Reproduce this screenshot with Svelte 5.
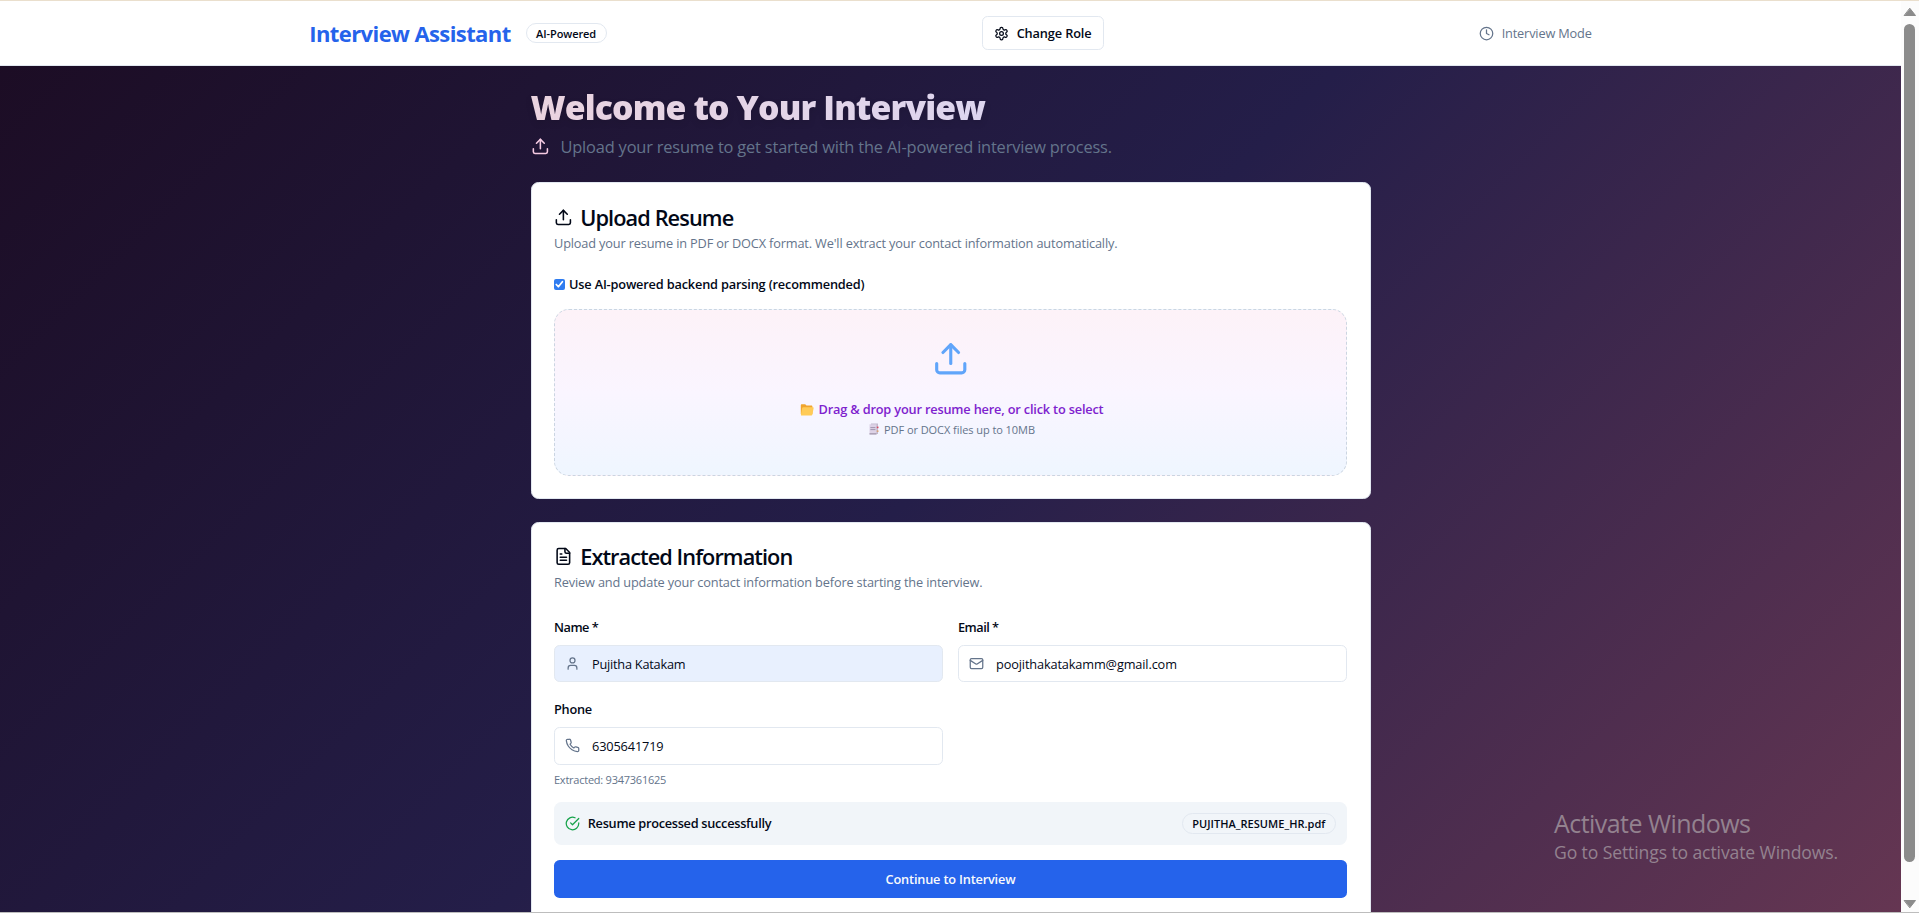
<script>
  let name = $state('Pujitha Katakam');
  let email = $state('poojithakatakamm@gmail.com');
  let phone = $state('6305641719');
  let useBackend = $state(true);
</script>

{#snippet upload()}
  <path d="M21 15v4a2 2 0 0 1-2 2H5a2 2 0 0 1-2-2v-4" />
  <polyline points="17 8 12 3 7 8" />
  <line x1="12" x2="12" y1="3" y2="15" />
{/snippet}

<div class="screen">
  <div class="page">
    <header>
      <div class="bar">
        <div class="brand">
          <span class="logo">Interview Assistant</span>
          <span class="badge">AI-Powered</span>
        </div>
        <button class="role">
          <svg class="i15" viewBox="0 0 24 24">
            <path d="M12.22 2h-.44a2 2 0 0 0-2 2v.18a2 2 0 0 1-1 1.73l-.43.25a2 2 0 0 1-2 0l-.15-.08a2 2 0 0 0-2.73.73l-.22.38a2 2 0 0 0 .73 2.73l.15.1a2 2 0 0 1 1 1.72v.51a2 2 0 0 1-1 1.74l-.15.09a2 2 0 0 0-.73 2.73l.22.38a2 2 0 0 0 2.73.73l.15-.08a2 2 0 0 1 2 0l.43.25a2 2 0 0 1 1 1.73V20a2 2 0 0 0 2 2h.44a2 2 0 0 0 2-2v-.18a2 2 0 0 1 1-1.73l.43-.25a2 2 0 0 1 2 0l.15.08a2 2 0 0 0 2.73-.73l.22-.39a2 2 0 0 0-.73-2.73l-.15-.08a2 2 0 0 1-1-1.74v-.5a2 2 0 0 1 1-1.74l.15-.09a2 2 0 0 0 .73-2.73l-.22-.38a2 2 0 0 0-2.73-.73l-.15.08a2 2 0 0 1-2 0l-.43-.25a2 2 0 0 1-1-1.73V4a2 2 0 0 0-2-2z" />
            <circle cx="12" cy="12" r="3" />
          </svg>
          <span>Change Role</span>
        </button>
        <div class="mode">
          <svg class="i15" viewBox="0 0 24 24"><circle cx="12" cy="12" r="10" /><polyline points="12 6 12 12 16 14" /></svg>
          <span>Interview Mode</span>
        </div>
      </div>
    </header>

    <main>
      <h1>Welcome to Your Interview</h1>
      <p class="lead">
        <svg class="i18" viewBox="0 0 24 24">{@render upload()}</svg>
        <span>Upload your resume to get started with the AI-powered interview process.</span>
      </p>

      <section class="card">
        <h2><svg class="i18" viewBox="0 0 24 24">{@render upload()}</svg><span class="t1">Upload Resume</span></h2>
        <p class="desc">Upload your resume in PDF or DOCX format. We'll extract your contact information automatically.</p>
        <label class="check">
          <input type="checkbox" bind:checked={useBackend} />
          <span class="box"><svg viewBox="0 0 12 12"><path d="M2.6 6.3 5 8.8 9.6 3.2" /></svg></span>
          <span>Use AI-powered backend parsing (recommended)</span>
        </label>
        <div class="drop">
          <svg class="big" viewBox="0 0 24 24">{@render upload()}</svg>
          <p class="drag">
            <svg class="folder" viewBox="0 0 14 14">
              <path d="M.8 2.4c0-.7.4-1.1 1-1.1h3.4l1.3 1.2h4.9c.6 0 1 .4 1 1V11H.8z" fill="#f0a52e" />
              <path d="M3.2 4.3h9.6c.6 0 .9.4.8 1l-1.2 6.3c-.1.7-.5 1-1.1 1H1.6c-.5 0-.8-.3-.7-.9l1.2-6.5c.1-.6.5-.9 1.1-.9z" fill="#ffcb57" />
            </svg>
            <span>Drag &amp; drop your resume here, or click to select</span>
          </p>
          <p class="hint">
            <svg class="pages" viewBox="0 0 12 12">
              <path d="M3 .5h7v10.5H3z" fill="#c3b9cc" />
              <path d="M1.5 1.3h7v10.2h-7z" fill="#ddd2e6" />
              <path d="M1.5 10.2h7v1.3h-7z" fill="#a398ac" />
              <path d="M2.8 4.6h4.2M2.8 6.6h4.2" stroke="#9187a0" stroke-width=".8" />
              <path d="M8.8 3.6h1.7v1.6H8.8z" fill="#d9475c" />
              <path d="M8.8 7.4h1.7v1.5H8.8z" fill="#d8a06d" />
            </svg>
            <span>PDF or DOCX files up to 10MB</span>
          </p>
        </div>
      </section>

      <section class="card">
        <h2>
          <svg class="i18" viewBox="0 0 24 24">
            <path d="M15 2H6a2 2 0 0 0-2 2v16a2 2 0 0 0 2 2h12a2 2 0 0 0 2-2V7Z" /><path d="M14 2v4a2 2 0 0 0 2 2h4" />
            <path d="M10 9H8" /><path d="M16 13H8" /><path d="M16 17H8" />
          </svg>
          <span class="t2">Extracted Information</span>
        </h2>
        <p class="desc">Review and update your contact information before starting the interview.</p>
        <div class="grid">
          <div class="field">
            <label for="name">Name *</label>
            <div class="wrap filled">
              <svg class="i15" viewBox="0 0 24 24"><path d="M19 21v-2a4 4 0 0 0-4-4H9a4 4 0 0 0-4 4v2" /><circle cx="12" cy="7" r="4" /></svg>
              <input id="name" class="n" bind:value={name} />
            </div>
          </div>
          <div class="field">
            <label for="email">Email *</label>
            <div class="wrap">
              <svg class="i15" viewBox="0 0 24 24"><rect width="20" height="16" x="2" y="4" rx="2" /><path d="m22 7-8.97 5.7a1.94 1.94 0 0 1-2.06 0L2 7" /></svg>
              <input id="email" bind:value={email} />
            </div>
          </div>
          <div class="field phone">
            <label for="phone">Phone</label>
            <div class="wrap">
              <svg class="i15" viewBox="0 0 24 24"><path d="M22 16.92v3a2 2 0 0 1-2.18 2 19.79 19.79 0 0 1-8.63-3.07 19.5 19.5 0 0 1-6-6 19.79 19.79 0 0 1-3.07-8.67A2 2 0 0 1 4.11 2h3a2 2 0 0 1 2 1.72 12.84 12.84 0 0 0 .7 2.81 2 2 0 0 1-.45 2.11L8.09 9.91a16 16 0 0 0 6 6l1.27-1.27a2 2 0 0 1 2.11-.45 12.84 12.84 0 0 0 2.81.7A2 2 0 0 1 22 16.92z" /></svg>
              <input id="phone" bind:value={phone} />
            </div>
            <p class="extracted">Extracted: 9347361625</p>
          </div>
        </div>
        <div class="status">
          <svg class="i15" viewBox="0 0 24 24"><path d="M22 11.08V12a10 10 0 1 1-5.93-9.14" /><path d="m9 11 3 3L22 4" /></svg>
          <span class="ok">Resume processed successfully</span>
          <span class="file">PUJITHA_RESUME_HR.pdf</span>
        </div>
        <button class="go">Continue to Interview</button>
      </section>
    </main>
  </div>

  <div class="scroll">
    <svg viewBox="0 0 14 10"><path d="M7 1.5 12.5 8.5H1.5z" /></svg>
    <div class="thumb"></div>
    <svg viewBox="0 0 14 10"><path d="M7 8.5 12.5 1.5H1.5z" /></svg>
  </div>

  <div class="watermark">
    <div class="w1">Activate Windows</div>
    <div class="w2">Go to Settings to activate Windows.</div>
  </div>
</div>

<style>
  :global(html) { font-size: 15px; }
  :global(body) { overflow: hidden; }
  * { box-sizing: border-box; margin: 0; }
  .screen {
    position: relative;
    display: flex;
    width: 100%;
    height: 913px;
    overflow: hidden;
    border-top: 1px solid #eadfcd;
    border-bottom: 1px solid #bdbdbd;
    font-family: "Open Sans", "Noto Sans", sans-serif;
    font-size: .85rem;
    line-height: 1.25rem;
    letter-spacing: -.16px;
    color: #020817;
  }
  .page {
    flex: 1;
    overflow: hidden;
    background: linear-gradient(135deg, #1c0c23 0%, #1f1433 22%, #241e49 50%, #653652 100%);
  }
  svg { flex: none; fill: none; stroke: currentColor; stroke-width: 2; stroke-linecap: round; stroke-linejoin: round; }
  .i15 { width: 15px; height: 15px; }
  .i18 { width: 18.75px; height: 18.75px; }

  header { height: 65px; background: #fff; border-bottom: 1px solid #e2e8f0; }
  .bar {
    display: flex;
    align-items: center;
    justify-content: space-between;
    width: 1282.5px;
    height: 64px;
    margin: 0 auto;
  }
  .brand { display: flex; align-items: center; gap: 15px; }
  .logo { padding-top: 0; font-size: 22px; line-height: 2rem; font-weight: 700; letter-spacing: -.59px; color: #2563eb; }
  .badge, .file {
    border: 1px solid #e2e8f0;
    border-radius: 99px;
    padding: 1.9px 9.4px;
    font-size: 11px;
    line-height: 1rem;
    font-weight: 550;
    letter-spacing: -.08px;
  }
  .role {
    display: flex;
    align-items: center;
    gap: 7.5px;
    height: 34px;
    padding: 0 11px;
    font: inherit;
    font-weight: 600;
    letter-spacing: -.12px;
    color: inherit;
    background: #fff;
    border: 1px solid #e2e8f0;
    border-radius: 5.6px;
  }
  .mode { display: flex; align-items: center; gap: 7.5px; color: #64748b; }

  main { width: 840px; margin: 0 auto; padding-top: 22.5px; }
  h1 {
    font-size: 2.25rem;
    line-height: 2.5rem;
    font-weight: 800;
    letter-spacing: -.88px;
    color: transparent;
    background: linear-gradient(90deg, #ead3df, #ddd5ef 54%, #d0d7fb);
    background-clip: text;
    filter: drop-shadow(0 3px 3px rgba(0, 0, 0, .1));
  }
  .lead {
    display: flex;
    align-items: center;
    gap: 11.25px;
    margin: 7.5px 0 22.5px;
    font-size: 16.4px;
    line-height: 1.75rem;
    letter-spacing: -.18px;
    color: #64748b;
  }
  .lead svg { color: #f6cbe3; }
  .card {
    padding: 22.5px;
    margin-bottom: 22.5px;
    background: #fff;
    border: 1px solid #e2e8f0;
    border-radius: 7.5px;
  }
  h2 { display: flex; align-items: center; gap: 7.5px; height: 22.5px; font-size: 21.75px; line-height: 1; font-weight: 550; }
  .t1 { padding-top: 2px; letter-spacing: -.92px; }
  .t2 { padding-top: 1px; letter-spacing: -.95px; }
  .desc { margin: 5.6px 0 22.5px; color: #64748b; letter-spacing: -.155px; }

  .check { display: flex; align-items: center; gap: 4.5px; font-weight: 600; letter-spacing: -.175px; }
  .check input { display: none; }
  .box { display: flex; width: 10.5px; height: 10.5px; border-radius: 2px; background: #2f7cf0; color: #fff; }
  .box svg { width: 100%; height: 100%; }
  .drop {
    display: flex;
    flex-direction: column;
    align-items: center;
    height: 166.9px;
    margin-top: 15px;
    padding-top: 30px;
    border: 1px dashed #cbd5e1;
    border-radius: 15px;
    background: linear-gradient(180deg, #fdf2f8, #faf5ff 50%, #eff6ff);
  }
  .big { width: 37.5px; height: 37.5px; color: #60a5fa; }
  .drag { display: flex; align-items: center; gap: 5px; margin: 23px 0 2.75px; padding-left: 2px; font-weight: 600; letter-spacing: -.175px; color: #7e22ce; }
  .hint { display: flex; align-items: center; gap: 4px; padding-left: 2px; font-size: 11px; line-height: 1rem; letter-spacing: -.06px; color: #64748b; }
  .folder { width: 14px; height: 14px; stroke: none; }
  .pages { width: 12px; height: 12px; stroke: none; }

  .grid { display: grid; grid-template-columns: 1fr 1fr; gap: 15px; }
  .field label { display: block; height: 22.5px; padding-top: 3px; font-weight: 600; letter-spacing: -.5px; }
  .phone label { letter-spacing: -.26px; }
  .wrap {
    display: flex;
    align-items: center;
    gap: 11.75px;
    height: 37.5px;
    margin-top: 7.5px;
    padding-left: 10.25px;
    border: 1px solid #e2e8f0;
    border-radius: 5.6px;
    color: #64748b;
  }
  .filled { background: #e8f0fe; }
  .wrap input {
    flex: 1;
    padding: 2px 0 0;
    border: 0;
    outline: 0;
    background: none;
    font: inherit;
    letter-spacing: -.14px;
    color: #020817;
  }
  .wrap .n { letter-spacing: -.23px; }
  .extracted { margin-top: 7.5px; font-size: 11px; line-height: 1rem; letter-spacing: -.24px; color: #64748b; }
  .status {
    display: flex;
    align-items: center;
    gap: 7.5px;
    height: 43px;
    margin: 15px 0;
    padding: 0 11.25px;
    border-radius: 7.5px;
    background: #f1f5f9;
    color: #16a34a;
  }
  .ok { flex: 1; font-weight: 600; letter-spacing: -.29px; color: #020817; }
  .file { letter-spacing: .04px; color: #020817; }
  .go {
    width: 100%;
    height: 37.5px;
    padding: 2px 0 0;
    border: 0;
    border-radius: 5.6px;
    background: #2563eb;
    color: #f8fafc;
    font: inherit;
    font-weight: 600;
    letter-spacing: -.18px;
  }

  .scroll {
    display: flex;
    flex-direction: column;
    align-items: center;
    width: 18px;
    padding: 6px 1px 3px 0;
    background: #fcfcfc;
  }
  .scroll svg { width: 14px; height: 10px; fill: #8b8b8b; stroke: #8b8b8b; stroke-width: 1; }
  .thumb { width: 11px; height: 838px; margin: 7px 0 auto; border-radius: 6px; background: #8b8b8b; }

  .watermark { position: absolute; left: 1554px; top: 805px; color: #93828f; pointer-events: none; }
  .w1 { font-size: 25px; line-height: 34px; letter-spacing: -.55px; }
  .w2 { font-size: 17.6px; line-height: 24px; letter-spacing: -.12px; }
</style>
